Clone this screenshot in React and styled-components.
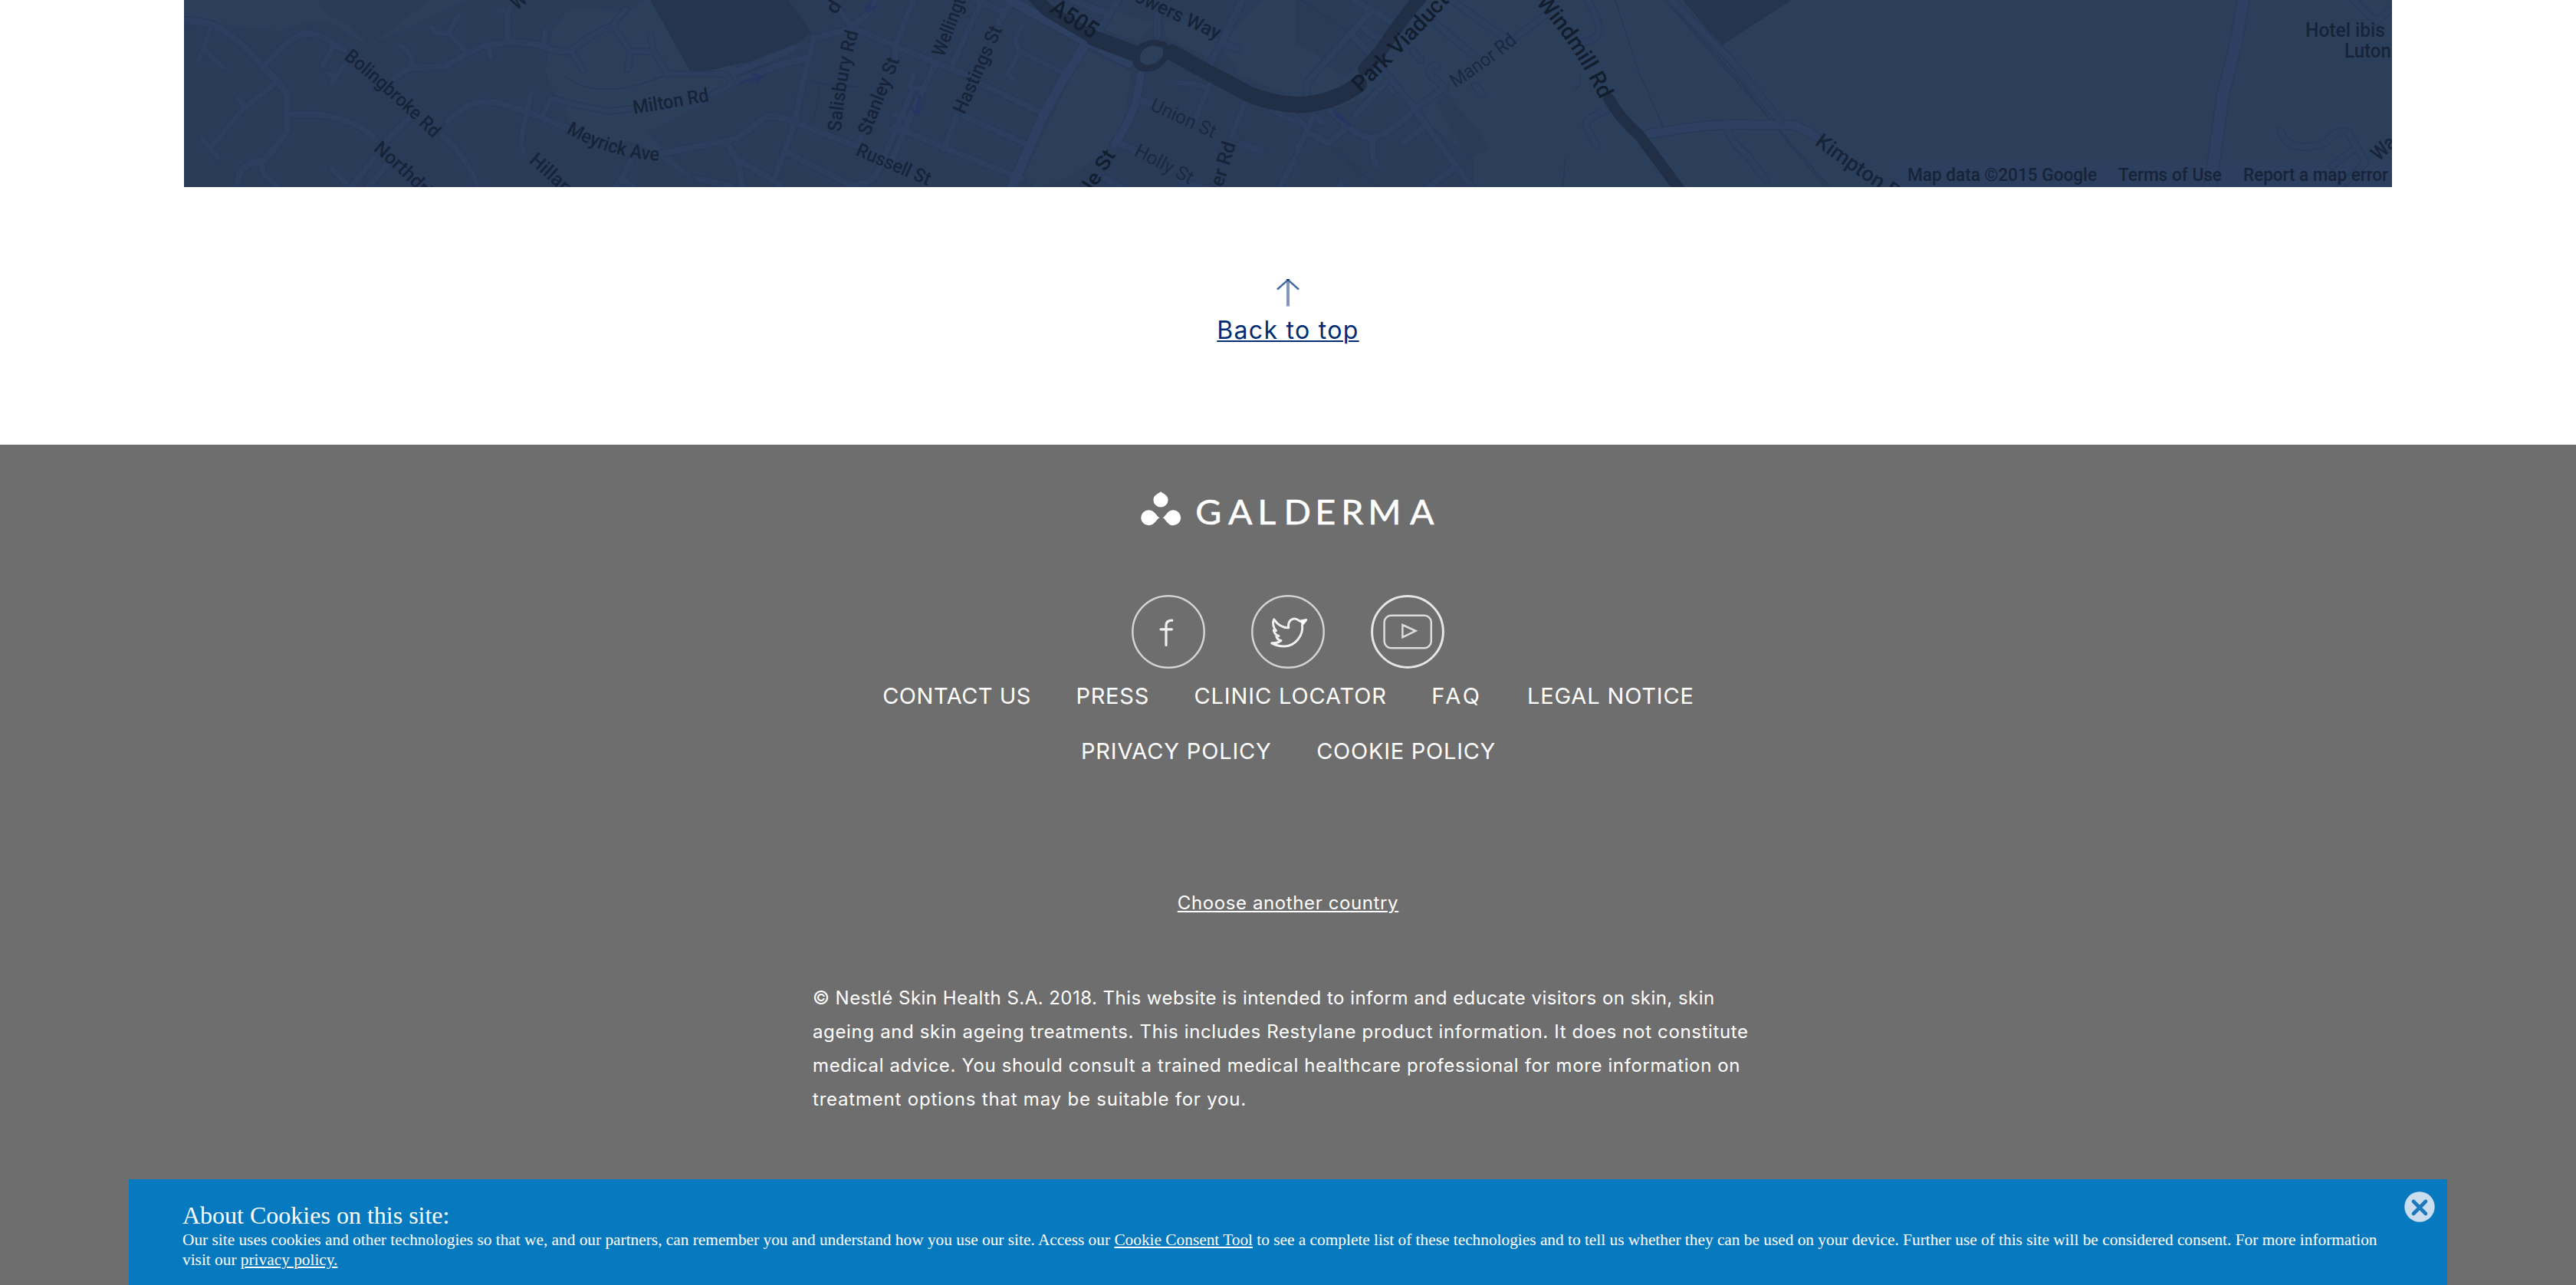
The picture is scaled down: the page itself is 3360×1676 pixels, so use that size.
import React from "react";
import styled, { createGlobalStyle } from "styled-components";

const GlobalStyle = createGlobalStyle`
  *, *::before, *::after { box-sizing: border-box; }
  html, body { margin: 0; padding: 0; background: #fff; }
  body { overflow: hidden; font-family: Inter, "Open Sans", sans-serif; }
`;

const Page = styled.div`
  display: flex;
  flex-direction: column;
  height: 1676px;
  overflow: hidden;
`;

const MapSection = styled.section`
  flex: none;
  height: 244px;
  margin: 0 240px;
  overflow: hidden;
  background: #2b3f5b;
`;

const MapDrawing = styled.svg`
  display: block;
  width: 2880px;
  height: 244px;
`;

const RoadPaths = styled.g`
  fill: none;
  stroke-linecap: round;
  stroke-linejoin: round;
  path { vector-effect: non-scaling-stroke; }
`;

const MapLabel = styled.text`
  font-family: Roboto, sans-serif;
  font-size: ${(p) => p.$size || 25}px;
  font-weight: ${(p) => (p.$faint ? 400 : 500)};
  fill: ${(p) => (p.$strong ? "#121d2e" : p.$faint ? "#1b2841" : "#172338")};
`;

const TopSection = styled.section`
  flex: none;
  height: 336px;
  padding-top: 120px;
  display: flex;
  flex-direction: column;
  align-items: center;
  gap: 12px;
`;

const ArrowIcon = styled.svg`
  display: block;
  width: 32px;
  height: 36px;
`;

const TopLink = styled.a`
  font-size: 32px;
  line-height: 38px;
  letter-spacing: 1.3px;
  color: #002d72;
  text-decoration: underline;
  text-decoration-thickness: 2px;
  text-underline-offset: 2px;
`;

const Footer = styled.footer`
  flex: 1;
  padding-top: 60px;
  display: flex;
  flex-direction: column;
  align-items: center;
  color: #fff;
  background: #6e6e6e;
`;

const Logo = styled.svg`
  display: block;
  width: 400px;
  height: 48px;
`;

const LogoText = styled.text`
  font-family: Lato, sans-serif;
  font-size: 44px;
  font-weight: 400;
  fill: #fff;
  stroke: #fff;
  stroke-width: 0.5;
`;

const SocialRow = styled.div`
  display: flex;
  gap: 60px;
  margin-top: 88px;
`;

const SocialIcon = styled.svg`
  display: block;
  width: 96px;
  height: 96px;
  fill: none;
  stroke: #f0f0f0;
  stroke-linecap: round;
  stroke-linejoin: round;
`;

const LinkRow = styled.nav`
  display: flex;
  gap: 58.5px;
  height: 72px;
  padding-left: 1px;
`;

const FooterLink = styled.a`
  font-size: 29px;
  line-height: 72px;
  white-space: nowrap;
  letter-spacing: ${(p) => p.$tracking}px;
`;

const CountryLink = styled.a`
  margin-top: 140px;
  font-size: 24px;
  line-height: 44px;
  letter-spacing: 0.61px;
  text-decoration: underline;
  text-decoration-thickness: 2px;
  text-underline-offset: 2px;
`;

const Legal = styled.p`
  width: 1240px;
  margin: 80px 0 0;
  font-size: 24px;
  line-height: 44px;
`;

const LegalLine = styled.span`
  display: block;
  white-space: nowrap;
  letter-spacing: ${(p) => p.$tracking}px;
`;

const CookieBar = styled.aside`
  position: fixed;
  left: 5%;
  bottom: 0;
  width: 90%;
  height: 138px;
  padding: 29px 70px 0;
  color: #fff;
  background: #0779bf;
  font-family: "Liberation Serif", "Times New Roman", serif;
`;

const CookieTitle = styled.h2`
  margin: 0;
  font-size: 32px;
  line-height: 37px;
  font-weight: 400;
`;

const CookieText = styled.p`
  margin: 0;
  font-size: 21.33px;
  line-height: 26px;
`;

const CookieLink = styled.a`
  text-decoration: underline;
  text-decoration-thickness: 2px;
  text-underline-offset: 2px;
`;

const CloseButton = styled.button`
  position: absolute;
  top: 16px;
  right: 16px;
  width: 40px;
  height: 40px;
  padding: 0;
  border: 0;
  background: none;
  svg { display: block; }
`;

/* Each sheet covers a 740 x 260 stretch of the map in its own 1568 x 780 grid. */
const sheets = [
  {
    x: 230,
    areas: [
      ["#2a3b58", "M0 80 L60 70 Q160 110 290 120 Q370 60 440 100 L530 180 L800 0 L1100 0 L1040 120 L1020 280 Q1040 370 1075 420 Q1080 500 1140 540 L1280 560 L1420 700 L1440 780 L0 780 Z"],
      ["#2a3b58", "M1300 520 L1420 430 L1568 330 L1568 780 L1430 780 L1420 690 Z"],
      ["#2a3b58", "M1050 110 Q1060 30 1130 30 L1240 50 L1300 0 L1020 0 Z"],
      ["#29385480", "M390 0 L420 60 L480 100 L530 178 L600 110 L700 0 Z"],
      ["#25354f", "M1310 0 L1420 278 L1480 274 L1568 244 L1568 0 Z"],
    ],
    roads: [
      [9, "M0 82 Q80 75 125 115 Q180 160 240 262 Q300 340 306 380 L306 510 Q270 590 240 630 Q175 640 172 700 L160 780"],
      [8, "M240 262 Q310 150 345 135 Q390 120 430 170 L465 195"],
      [7, "M95 110 L75 190 L62 235 M75 190 L130 265"],
      [7, "M275 325 L185 425 L100 570 M170 385 L190 420 M70 540 L115 615"],
      [8, "M306 448 L385 447 Q500 465 550 545"],
      [7, "M235 640 L240 680 L290 745 M430 660 L480 735"],
      [8, "M645 460 L580 550 M545 620 L480 740 M585 640 L520 750"],
      [8, "M735 530 Q815 630 832 740"],
      [8, "M750 475 Q800 400 860 397 Q900 400 1000 455 L1080 500"],
      [7, "M980 365 L968 450 Q945 560 960 590 M1010 460 L1035 385 Q1140 425 1200 435 L1255 425 M1480 370 L1540 328"],
      [7, "M435 180 L405 255 M465 250 L430 325 M420 290 L440 300"],
      [8, "M600 310 Q630 270 660 265 L740 262 Q810 200 850 180 Q930 155 1000 175 Q1060 210 1090 200 Q1180 100 1210 105"],
      [7, "M620 180 Q660 220 652 262 M780 60 L752 130 L800 200 M705 108 L720 128 L752 130 M863 180 L868 225"],
      [7, "M925 20 L915 60 L915 155 M893 42 L912 46 M1020 120 L1015 180"],
      [7, "M1090 200 L1125 275 M1210 100 Q1210 80 1243 38 M1210 105 L1255 200 L1320 203 L1358 290 L1510 290 Q1530 300 1535 325"],
      [7, "M1255 200 L1248 270 M1310 142 L1320 200"],
      [8, "M1340 600 L1520 552 L1568 530 M1520 560 Q1560 640 1568 700 M1440 700 L1530 725 M1255 630 L1230 700 L1210 745 M1230 700 L1270 740"],
    ],
    lines: ["M1075 300 Q1170 400 1345 298"],
    major: [],
  },
  {
    x: 960,
    areas: [
      ["#2a3b58", "M0 0 L1450 0 L1340 180 L1390 280 L1568 400 L1568 780 L0 780 Z"],
      ["#25354f", "M0 0 L145 0 L210 130 Q110 230 0 250 Z"],
      ["#2b3f5a", "M960 190 L1090 280 Q1080 500 1030 580 Q930 700 830 740 L800 680 L860 500 Z"],
      ["#2b3f5a", "M1000 110 L1040 40 L1160 90 L1110 160 Z M1180 90 L1250 60 L1340 160 L1310 230 L1190 150 Z"],
      ["#2b3f5a", "M1330 260 L1380 290 Q1450 200 1540 160 L1568 180 L1568 350 L1490 350 Z"],
    ],
    roads: [
      [9, "M0 320 L110 260 L195 225 M0 280 L160 190"],
      [8, "M215 150 L325 110 L440 180 L560 250 L650 300 M680 330 L850 445"],
      [8, "M215 150 L190 290 L160 490 L105 705 M285 40 L320 105 L360 60 L385 0"],
      [8, "M0 545 L80 460 Q110 445 165 480 L330 570 M145 600 L310 720 Q380 730 395 660 L490 345"],
      [8, "M0 620 L120 720 M5 640 L20 740"],
      [8, "M490 0 L440 180 L440 225 M550 250 L500 400 L420 660 M345 540 L335 570"],
      [8, "M680 0 L600 245 M660 0 L740 45 M765 0 L725 90 M610 455 L575 580 M630 455 L820 575 M440 495 L570 575 L790 700"],
      [7, "M490 295 L480 340 L520 350 M440 450 L480 470 M430 510 L480 520"],
      [7, "M790 100 L770 160 L785 200 L750 290 L765 310 M785 200 L905 285"],
      [12, "M755 0 L970 165 L905 310 L850 450 L760 740"],
      [10, "M970 165 L1085 250 M1120 290 L1105 400 Q1080 500 1045 565"],
      [9, "M1115 390 L1145 405 M1065 565 L1105 590 M1395 565 L1450 590 M1020 700 L1060 730 M1230 710 L1300 740"],
      [9, "M930 0 L1020 50 M1055 0 L1005 120 M1165 60 L1165 140 M1400 0 L1345 160 L1310 250 M1345 170 L1385 190"],
      [7, "M1225 325 Q1260 320 1300 345 M1310 325 L1270 465 M1410 390 L1370 530 M1568 560 L1500 740 M1480 430 L1568 490"],
    ],
    lines: ["M200 315 L270 335 L340 340 M232 340 L215 470"],
    arrows: ["M375 -5 L365 45 L358 20 M365 45 L385 25", "M15 322 L70 300 L45 290 M70 300 L58 322", "M508 375 L497 445 L485 425 M497 445 L512 428"],
    major: [
      [17, "M820 -20 L860 40 L990 150"],
      [21, "M990 150 L1095 205"],
      [21, "M1205 205 L1280 265 L1420 370 Q1490 410 1568 412"],
    ],
    loop: true,
  },
  {
    x: 1690,
    areas: [
      ["#2a3b58", "M0 0 L190 0 L330 0 L230 180 L140 300 Q80 270 60 210 L0 170 Z"],
      ["#2a3b58", "M0 440 L100 430 L250 340 L320 430 L490 620 L490 780 L0 780 Z"],
      ["#29385580", "M385 400 L420 365 L450 420 L500 500 L535 580 L480 625 Z"],
      ["#25354f", "M1070 0 L1175 180 L1370 0 Z"],
    ],
    roads: [
      [8, "M160 0 L210 40 L265 85 M210 40 L30 325 L30 370 M150 130 L215 225 L320 410 L490 740 M190 110 Q210 150 250 150"],
      [8, "M250 320 L165 450 M430 0 L580 150 M385 90 L490 215 M325 200 L345 235 M495 335 L515 365"],
      [8, "M610 145 L690 60 M410 345 L340 415 Q250 540 205 540 Q150 520 95 430 M215 540 Q205 600 225 650 M300 555 L350 500"],
      [8, "M410 340 L370 290 Q370 260 390 255 M0 600 L50 455 L75 480 M30 515 L90 560 L140 500 M0 460 L30 500 M435 660 L365 735 M125 715 L120 740"],
      [8, "M805 0 Q830 50 840 120 Q830 160 790 165 M860 430 Q790 470 805 500 L830 565"],
      [11, "M975 525 Q1150 480 1260 488 L1370 488 Q1400 500 1440 535"],
      [8, "M1195 510 Q1200 550 1250 610 L1300 705"],
      [9, "M1040 0 L1200 230 L1345 485"],
    ],
    lines: ["M883 0 L945 270 L1015 495 M745 618 L738 740 M785 290 Q795 330 770 355 M15 0 L150 130 M100 575 L225 735", "M1020 0 L1220 320 L1480 740", "M1050 40 L1230 320 L1350 540 L1470 740"],
    arrows: ["M108 437 L150 492 M112 455 L138 478"],
    major: [
      [21, "M-10 412 Q100 410 175 330"],
      [17, "M345 -10 Q290 80 235 200 L190 270"],
      [14.5, "M865 385 Q900 470 950 530 L1060 740"],
    ],
  },
  {
    x: 2400,
    areas: [["#2c3f5e", "M155 633 L1530 633 L1530 780 L155 780 Z"]],
    roads: [
      [15, "M1115 -10 Q1100 160 1060 360 L1022 740"],
      [8, "M1420 0 L1480 85 L1530 30 M1218 515 Q1230 575 1285 575 Q1340 570 1350 545 Q1380 500 1405 520 L1450 630 M1415 590 L1360 650 M1450 640 L1380 735"],
    ],
    lines: [],
    major: [],
  },
];

const labels = [
  { d: "M448 76 Q511 127 564 180", t: "Bolingbroke Rd", len: 157 },
  { d: "M486 196 Q520 224 558 262", t: "Northdri", len: 92 },
  { d: "M674 14 L714 -17", t: "Wo", len: 32, size: 28 },
  { d: "M827 149 L926 132", t: "Milton Rd", len: 100 },
  { d: "M738 173 Q795 206 862 210", t: "Meyrick Ave", len: 128 },
  { d: "M689 211 Q725 242 758 276", t: "Hillary C", len: 95 },
  { d: "M1090 20 L1102 1", t: "d", len: 16 },
  { d: "M1097 172 Q1103 100 1120 41", t: "Salisbury Rd", len: 132 },
  { d: "M1134 178 L1174 77", t: "Stanley St", len: 107 },
  { d: "M1115 202 L1216 245", t: "Russell St", len: 103 },
  { d: "M1231 75 L1266 -16", t: "Wellingto", len: 92 },
  { d: "M1258 150 L1308 37", t: "Hastings St", len: 122 },
  { d: "M1368 15 L1430 55", t: "A505", len: 67, size: 31, strong: true },
  { d: "M1478 1 L1592 54", t: "owers Way", len: 121 },
  { d: "M1499 143 L1583 181", t: "Union St", len: 91, faint: true },
  { d: "M1478 202 L1552 241", t: "Holly St", len: 83, faint: true },
  { d: "M1421 258 L1457 200", t: "tle St", len: 66, size: 26, strong: true },
  { d: "M1588 266 L1614 181", t: "mer Rd", len: 82 },
  { d: "M1775 121 Q1830 68 1900 -8", t: "Park Viaduct", len: 167, size: 29, strong: true },
  { d: "M1898 115 Q1945 84 1981 54", t: "Manor Rd", len: 101, faint: true },
  { d: "M2003 4 Q2054 60 2087 130", t: "Windmill Rd", len: 152, size: 29, strong: true },
  { d: "M2366 188 Q2420 228 2474 262", t: "Kimpton R", len: 128, size: 27 },
  { d: "M3103 211 L3140 176", t: "Wa", len: 33, size: 27 },
];

const plainLabels = [
  { x: 3007, y: 47.5, t: "Hotel ibis", len: 104 },
  { x: 3058, y: 74.5, t: "Luton", len: 61 },
  { x: 2488, y: 236, t: "Map data ©2015 Google", len: 247, size: 23 },
  { x: 2763, y: 236, t: "Terms of Use", len: 135, size: 23 },
  { x: 2926, y: 236, t: "Report a map error", len: 189, size: 23 },
];

function MapSheet({ sheet, index }) {
  return (
    <g transform={`translate(${sheet.x} 0) scale(${740 / 1568} ${260 / 780})`} clipPath={`url(#sheet-${index})`}>
      {sheet.areas.map(([fill, d], i) => (
        <path key={i} d={d} fill={fill} />
      ))}
      <RoadPaths>
        {sheet.lines.map((d, i) => (
          <path key={i} d={d} stroke="#273754" strokeWidth="1.5" />
        ))}
        {sheet.roads.map(([w, d], i) => (
          <path key={i} d={d} stroke="#283856" strokeWidth={w + 2.4} />
        ))}
        {sheet.roads.map(([w, d], i) => (
          <path key={i} d={d} stroke={w > 9 ? "#2d4061" : "#2b3e5d"} strokeWidth={w} />
        ))}
        {(sheet.arrows || []).map((d, i) => (
          <path key={i} d={d} stroke="#283562" strokeWidth="3.5" />
        ))}
        {sheet.major.map(([w, d], i) => (
          <path key={i} d={d} stroke="#202e46" strokeWidth={w} />
        ))}
        {sheet.loop && (
          <>
            <path d="M1148 180 Q1105 195 1115 245 Q1125 265 1155 250 Q1190 220 1178 185 Z" stroke="#202e46" strokeWidth="16" />
            <path d="M1150 178 Q1110 195 1118 240 Q1130 262 1155 250 Q1190 220 1178 185 Z" fill="#2b3f5b" />
          </>
        )}
      </RoadPaths>
    </g>
  );
}

function StreetMap() {
  return (
    <MapDrawing viewBox="240 0 2880 244">
      <defs>
        {sheets.map((s, i) => (
          <clipPath id={`sheet-${i}`} key={i}>
            <rect x="0" y="0" width={i === 0 ? 1547 : i === 2 ? 1504 : 1560} height="780" />
          </clipPath>
        ))}
        {labels.map((l, i) => (
          <path id={`street-${i}`} key={i} d={l.d} />
        ))}
      </defs>
      {sheets.map((s, i) => (
        <MapSheet key={i} sheet={s} index={i} />
      ))}
      {labels.map((l, i) => (
        <MapLabel key={i} $size={l.size} $strong={l.strong} $faint={l.faint}>
          <textPath href={`#street-${i}`} textLength={l.len} lengthAdjust="spacingAndGlyphs">
            {l.t}
          </textPath>
        </MapLabel>
      ))}
      {plainLabels.map((l) => (
        <MapLabel key={l.t} x={l.x} y={l.y} textLength={l.len} lengthAdjust="spacingAndGlyphs" $size={l.size}>
          {l.t}
        </MapLabel>
      ))}
    </MapDrawing>
  );
}

const linkRows = [
  [
    ["Contact us", 0.5],
    ["Press", 0.75],
    ["Clinic locator", 0.88],
    ["FAQ", 3.5],
    ["Legal notice", 0.85],
  ],
  [
    ["Privacy policy", 0.85],
    ["Cookie policy", 0.75],
  ],
];

const legalLines = [
  ["© Nestlé Skin Health S.A. 2018. This website is intended to inform and educate visitors on skin, skin", 0.465],
  ["ageing and skin ageing treatments. This includes Restylane product information. It does not constitute", 0.64],
  ["medical advice. You should consult a trained medical healthcare professional for more information on", 0.62],
  ["treatment options that may be suitable for you.", 0.79],
];

export default function App() {
  return (
    <Page>
      <GlobalStyle />
      <MapSection>
        <StreetMap />
      </MapSection>

      <TopSection>
        <ArrowIcon viewBox="0 0 32 36" fill="none">
          <path d="M16 1 V35.5" stroke="#8299bd" strokeWidth="4" />
          <path d="M2 13.5 L16 1 L30 13.5" stroke="#486a9e" strokeWidth="2.4" />
          <path d="M13.5 0 H18.5 L16 3 Z" fill="#0b3577" />
        </ArrowIcon>
        <TopLink>Back to top</TopLink>
      </TopSection>

      <Footer>
        <Logo viewBox="0 0 400 48">
          <g fill="#fff">
            <path d="M34 1.3 C36 3.4 43.6 5.5 43.6 12 A9.6 9.6 0 0 1 24.4 12 C24.4 5.5 32 3.4 34 1.3 Z" />
            <path d="M33 35.3 C29 35.3 27 45.3 18.2 45.3 A10 10 0 0 1 18.2 25.3 C27 25.3 29 35.3 33 35.3 Z" />
            <path d="M36 35.3 C40 35.3 42 45.3 50.2 45.3 A10 10 0 0 0 50.2 25.3 C42 25.3 40 35.3 36 35.3 Z" />
          </g>
          <g transform="scale(1.06 1)">
            <LogoText x="74.8 115.2 151.2 183.6 222 254 287.1 338.6" y="44">GALDERMA</LogoText>
          </g>
        </Logo>

        <SocialRow>
          <SocialIcon viewBox="0 0 96 96">
            <circle cx="48" cy="48" r="46.7" strokeWidth="2.5" stroke="#d4d4d4" />
            <path d="M45 65.5 V40 Q45 33.2 52.8 33.2 M38 44.8 H52.5" strokeWidth="3.2" />
          </SocialIcon>
          <SocialIcon viewBox="0 0 96 96">
            <circle cx="48" cy="48" r="46.7" strokeWidth="2.5" stroke="#d4d4d4" />
            <path
              d="M29.7 31.8 C34 38 41 42.8 48.7 42.8 C47.5 35 52 31 56.5 31 C60 31 62.5 33.5 63.5 34 C66 34 69.5 32.8 71.8 32.6 L66.5 39 C68.5 53 57 67 43 67 C36.5 67 31 65 26.8 62.8 C31 63 36 62 39 59.5 C35 59 33.5 56.5 32.8 54 L36 53.5 C32.5 52.5 30 49.5 29.3 46 L32.5 46.5 C29 43 27.2 36.5 29.7 31.8 Z"
              strokeWidth="3"
            />
            <path d="M64 34.5 L71.5 32.6 L67 38 Z" fill="#fff" stroke="#fff" />
          </SocialIcon>
          <SocialIcon viewBox="0 0 96 96">
            <circle cx="48" cy="48" r="46.4" strokeWidth="3" stroke="#e6e6e6" />
            <rect x="17.6" y="26.7" width="61.2" height="42.6" rx="9" strokeWidth="2.5" stroke="#dcdcdc" />
            <path d="M41.4 39 L58.5 46.8 L41.4 55.2 Z" strokeWidth="2.5" stroke="#dcdcdc" strokeLinejoin="miter" />
          </SocialIcon>
        </SocialRow>

        {linkRows.map((row, i) => (
          <LinkRow key={i}>
            {row.map(([label, tracking]) => (
              <FooterLink key={label} $tracking={tracking}>
                {label.toUpperCase()}
              </FooterLink>
            ))}
          </LinkRow>
        ))}

        <CountryLink>Choose another country</CountryLink>

        <Legal>
          {legalLines.map(([line, tracking]) => (
            <LegalLine key={line} $tracking={tracking}>
              {line}
            </LegalLine>
          ))}
        </Legal>
      </Footer>

      <CookieBar>
        <CookieTitle>About Cookies on this site:</CookieTitle>
        <CookieText>
          Our site uses cookies and other technologies so that we, and our partners, can remember you and understand how
          you use our site. Access our <CookieLink>Cookie Consent Tool</CookieLink> to see a complete list of these
          technologies and to tell us whether they can be used on your device. Further use of this site will be
          considered consent. For more information visit our <CookieLink>privacy policy.</CookieLink>
        </CookieText>
        <CloseButton aria-label="Close">
          <svg width="40" height="40" viewBox="0 0 40 40">
            <circle cx="20" cy="20" r="19.7" fill="#cadef0" />
            <path d="M12 13 L28 29 M28 13 L12 29" stroke="#1b78bd" strokeWidth="4.6" strokeLinecap="round" />
          </svg>
        </CloseButton>
      </CookieBar>
    </Page>
  );
}
